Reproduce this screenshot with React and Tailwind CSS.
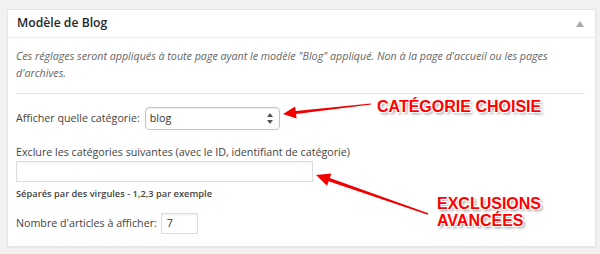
import React from "react";

const annotation =
  "absolute font-['Liberation_Sans',Arial,sans-serif] font-bold text-[16px] text-[#f00] [text-shadow:-1px_-1px_0_#fff,1px_-1px_0_#fff,-1px_1px_0_#fff,1px_1px_0_#fff,0_-1px_0_#fff,0_1px_0_#fff,2px_2px_3px_rgba(0,0,0,0.45)]";

const Arrows = () => (
  <svg className="absolute left-0 top-0 pointer-events-none" width="600" height="254" viewBox="0 0 600 254">
    <polygon
      fill="#f20000"
      points="283,114 295.2,106.6 295.7,110.9 370.9,103.4 371.1,104.6 296.1,114.1 296.6,118.5"
    />
    <polygon
      fill="#f20000"
      points="316,175 331.3,173.5 329.8,177.9 428.2,213.3 427.8,214.7 328.6,181.3 327.1,185.7"
    />
  </svg>
);

export default function App() {
  return (
    <div className="relative min-h-[254px] bg-[#f1f1f1] pt-[9px] pl-[7px] pr-[4px] font-['Open_Sans',sans-serif] text-[#444]">
      <div className="border border-[#e5e5e5] bg-white shadow-[0_1px_1px_rgba(0,0,0,0.04)]">
        {/* header */}
        <div className="flex h-[28px] items-center justify-between border-b border-[#eee] pl-[9px] pr-[11px]">
          <h3 className="text-[12.2px] font-semibold text-[#23282d]">Modèle de Blog</h3>
          <svg width="8" height="6" viewBox="0 0 8 6">
            <polygon points="4,0 8,6 0,6" fill="#aaa" />
          </svg>
        </div>

        <div className="pl-[8px] pr-[10px] pt-[10px] pb-[12px] text-[10.7px]">
          <p className="italic leading-[17px] text-[#666]">
            Ces réglages seront appliqués à toute page ayant le modèle "Blog" appliqué. Non à la page d'accueil ou les pages
            d'archives.
          </p>
          <hr className="mt-[11px] border-t border-[#e1e1e1]" />

          <div className="mt-[13px] flex items-center leading-[17px]">
            <span>Afficher quelle catégorie:</span>
            <div className="ml-[5px] flex h-[23px] w-[135px] items-center justify-between rounded-[4px] border border-[#c5c5c5] pl-[4px] pr-[6px] text-[#333] shadow-[inset_0_1px_2px_rgba(0,0,0,0.07)]">
              <span>blog</span>
              <svg width="6" height="11" viewBox="0 0 6 11">
                <polygon points="3,0 6,4 0,4" fill="#555" />
                <polygon points="0,7 6,7 3,11" fill="#555" />
              </svg>
            </div>
          </div>

          <p className="mt-[14px] leading-[17px]">
            Exclure les catégories suivantes (avec le ID, identifiant de catégorie)
          </p>
          <div className="h-[21px] w-[297px] border border-[#ddd] shadow-[inset_0_1px_2px_rgba(0,0,0,0.07)]" />
          <p className="mt-[4px] text-[9.3px] font-semibold leading-[15px] text-[#444]">
            Séparés par des virgules - 1,2,3 par exemple
          </p>

          <div className="mt-[12px] flex items-center leading-[17px]">
            <span>Nombre d'articles à afficher:</span>
            <div className="ml-[4px] flex h-[21px] w-[37px] items-center border border-[#ddd] pl-[5px] text-[#333] shadow-[inset_0_1px_2px_rgba(0,0,0,0.07)]">
              7
            </div>
          </div>
        </div>
      </div>

      <Arrows />
      <div className={`${annotation} left-[377px] top-[99px] leading-[16px]`}>CATÉGORIE CHOISIE</div>
      <div className={`${annotation} left-[437px] top-[195px] leading-[17px]`}>
        EXCLUSIONS
        <br />
        AVANCÉES
      </div>
    </div>
  );
}
